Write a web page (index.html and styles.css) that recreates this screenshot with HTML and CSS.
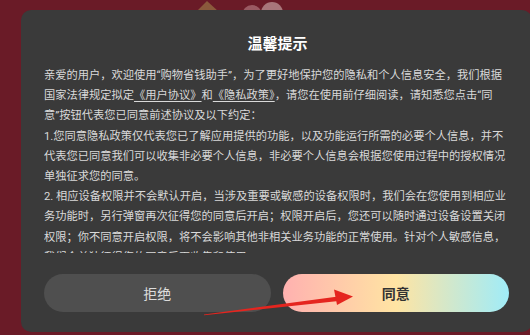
FILE: index.html
```html
<!DOCTYPE html>
<html lang="zh-CN">
<head>
<meta charset="utf-8">
<title>温馨提示</title>
<link rel="stylesheet" href="styles.css">
</head>
<body>
<svg class="bg-deco" width="530" height="20" viewBox="0 0 530 20" aria-hidden="true">
  <polygon points="196,12 207,1 219,12" fill="#8a5a3c"/>
  <circle cx="252" cy="15" r="10" fill="#9a5a62"/>
  <circle cx="272" cy="13" r="11" fill="#a8767a"/>
</svg>
<div class="dialog">
  <h1 class="title">温馨提示</h1>
  <div class="content">
    <p>亲爱的用户，欢迎使用“购物省钱助手”，为了更好地保护您的隐私和个人信息安全，我们根据国家法律规定拟定<span class="link">《用户协议》</span>和<span class="link">《隐私政策》</span>，请您在使用前仔细阅读，请知悉您点击“同意”按钮代表您已同意前述协议及以下约定：</p>
    <p>1.您同意隐私政策仅代表您已了解应用提供的功能，以及功能运行所需的必要个人信息，并不代表您已同意我们可以收集非必要个人信息，非必要个人信息会根据您使用过程中的授权情况单独征求您的同意。</p>
    <p>2. 相应设备权限并不会默认开启，当涉及重要或敏感的设备权限时，我们会在您使用到相应业务功能时，另行弹窗再次征得您的同意后开启；权限开启后，您还可以随时通过设备设置关闭权限；你不同意开启权限，将不会影响其他非相关业务功能的正常使用。针对个人敏感信息，我们会单独征得您的同意后再收集和使用。</p>
  </div>
  <div class="actions">
    <button class="btn btn-reject">拒绝</button>
    <button class="btn btn-agree">同意</button>
  </div>
</div>
<svg class="arrow" width="530" height="335" viewBox="0 0 530 335" aria-hidden="true">
  <polygon points="204,314.6 340,296.2 341,300.8 204,315.2" fill="#e5251f"/>
  <polygon points="334,289.5 353,296.5 337,305" fill="#e5251f"/>
</svg>
</body>
</html>
```
FILE: styles.css
```css
* { box-sizing: border-box; }
html, body {
  margin: 0;
  padding: 0;
}
body {
  width: 530px;
  height: 335px;
  overflow: hidden;
  background: #6a1b27;
  position: relative;
  font-family: Roboto, "Noto Sans CJK SC", sans-serif;
}
.bg-deco {
  position: absolute;
  left: 0;
  top: 0;
}
.dialog {
  position: relative;
  margin: 10px 0 0 21px;
  width: 511px;
  height: 322px;
  background: #3a3a3a;
  border-radius: 10px;
  padding: 24px 23px 20px;
  display: flex;
  flex-direction: column;
}
.title {
  margin: 0;
  font-size: 15px;
  line-height: 20px;
  font-weight: 600;
  color: #ffffff;
  text-align: center;
  padding-left: 2px;
}
.content {
  margin-top: 12px;
  height: 187px;
  overflow: hidden;
  padding-right: 1.5px;
  color: #d9d9d9;
  font-size: 11.25px;
  line-height: 20.2px;
}
.content p { margin: 0; }
.link {
  text-decoration: underline;
  text-underline-offset: 2px;
}
.actions {
  margin-top: 21px;
  display: flex;
  gap: 12px;
}
.btn {
  flex: 1;
  height: 38px;
  border: 0;
  border-radius: 19px;
  font-family: Roboto, "Noto Sans CJK SC", sans-serif;
  font-size: 14px;
  padding: 0;
}
.btn-reject {
  background: #4f4f4f;
  color: #dcdcdc;
}
.btn-agree {
  background: linear-gradient(90deg, #ffb1b0 0%, #ffe4a3 50%, #a0ecf8 100%);
  color: #333333;
  font-weight: 600;
}
.arrow {
  position: absolute;
  left: 0;
  top: 0;
  pointer-events: none;
}
```
